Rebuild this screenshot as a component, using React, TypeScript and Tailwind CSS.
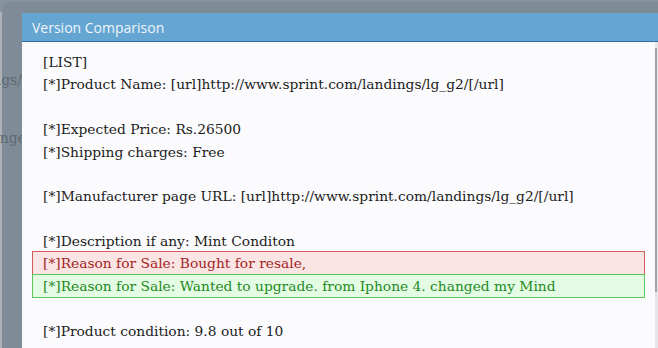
import React from 'react';

type Line = { text: string; kind?: 'del' | 'ins' | 'blank' };

const lines: Line[] = [
  { text: '[LIST]' },
  { text: '[*]Product Name: [url]http://www.sprint.com/landings/lg_g2/[/url]' },
  { text: '', kind: 'blank' },
  { text: '[*]Expected Price: Rs.26500' },
  { text: '[*]Shipping charges: Free' },
  { text: '', kind: 'blank' },
  { text: '[*]Manufacturer page URL: [url]http://www.sprint.com/landings/lg_g2/[/url]' },
  { text: '', kind: 'blank' },
  { text: '[*]Description if any: Mint Conditon' },
  { text: '[*]Reason for Sale: Bought for resale,', kind: 'del' },
  { text: '[*]Reason for Sale: Wanted to upgrade. from Iphone 4. changed my Mind', kind: 'ins' },
  { text: '', kind: 'blank' },
  { text: '[*]Product condition: 9.8 out of 10' },
  { text: '[*]Purchase Date: February' },
];

function DiffLine({ line }: { line: Line }) {
  if (line.kind === 'del') {
    return (
      <div className="-mt-[2px] h-[24px] border border-[#d65a5a] bg-[#fbe4e4] pl-[10px] text-[#a3261f] leading-[22px] whitespace-nowrap">
        {line.text}
      </div>
    );
  }
  if (line.kind === 'ins') {
    return (
      <div className="-mt-px h-[24px] border border-[#5cc75c] bg-[#e4fce4] pl-[10px] text-[#1f8a1f] leading-[22px] whitespace-nowrap">
        {line.text}
      </div>
    );
  }
  return (
    <div className="h-[22.4px] pl-[11px] leading-[22.4px] text-[#1c1c1c] whitespace-pre">
      {line.text || ' '}
    </div>
  );
}

export default function App() {
  return (
    <div className="relative h-[348px] w-[658px] overflow-hidden bg-[#8794a0]">
      {/* page behind the overlay */}
      <div className="absolute inset-0 top-[2px] left-[2px] rounded-tl-[9px] bg-[#7f8c98]" />
      <div className="absolute left-0 top-[12px] bottom-0 w-[2px] bg-[#aeb2b6]" />
      <div
        className="absolute left-0 top-[69px] w-[22px] overflow-hidden text-[14px] text-[#5d6872]"
        style={{ fontFamily: '"DejaVu Serif", Georgia, serif' }}
      >
        <div className="flex h-[22px] items-center justify-end whitespace-nowrap">
          <span className="shrink-0">landings/</span>
        </div>
        <div className="mt-[36px] flex h-[22px] items-center justify-end whitespace-nowrap">
          <span className="-mr-[4px] shrink-0">change</span>
        </div>
      </div>

      {/* dialog */}
      <div className="absolute left-[22px] top-[13px] right-0 bottom-0 flex flex-col">
        <div className="flex h-[29px] shrink-0 items-center border-b border-[#2c6ea6] bg-[#64a5d1] pl-[10px]">
          <span
            className="text-[14px] text-[#eef5fb]"
            style={{ fontFamily: '"Open Sans", "Noto Sans", sans-serif' }}
          >
            Version Comparison
          </span>
        </div>
        <div className="flex min-h-0 flex-1 overflow-hidden bg-[#fbfbfd]">
          <div
            className="flex-1 pl-[10px] pr-[10px] pt-[9px] text-[13.8px]"
            style={{ fontFamily: '"DejaVu Serif", Georgia, serif' }}
          >
            {lines.map((l, i) => (
              <DiffLine key={i} line={l} />
            ))}
          </div>
          <div className="flex w-[3px] flex-col bg-[#e6e6e8]">
            <div className="mt-[6px] h-[244px] w-[2px] bg-[#a3a3a6]" />
          </div>
        </div>
      </div>
    </div>
  );
}
